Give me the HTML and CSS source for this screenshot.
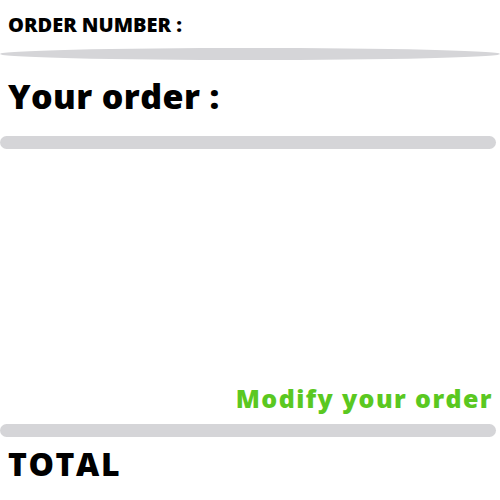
FILE: index.html
```html
<!DOCTYPE html>
<html>
<head>
<meta charset="utf-8">
<link rel="stylesheet" href="styles.css">
</head>
<body>
<div class="page">
  <div class="order-number">ORDER NUMBER :</div>
  <div class="lens"></div>
  <h1 class="title">Your order :</h1>
  <div class="bar"></div>
  <div class="items"></div>
  <div class="modify">Modify your order</div>
  <div class="bar"></div>
  <div class="total">TOTAL</div>
</div>
</body>
</html>
```
FILE: styles.css
```css
html, body {
  margin: 0;
  padding: 0;
  background: #ffffff;
}
.page {
  width: 500px;
  display: flex;
  flex-direction: column;
  font-family: "Open Sans", "DejaVu Sans", sans-serif;
  font-weight: 800;
  color: #000;
}
.order-number {
  font-size: 20px;
  line-height: 24px;
  padding: 13px 0 0 8px;
  height: 24px;
}
.lens {
  margin-top: 11px;
  width: 500px;
  height: 12px;
  border-radius: 50%;
  background: #d5d5d8;
}
.title {
  margin: 0;
  font-size: 34px;
  letter-spacing: 0.4px;
  line-height: 40px;
  padding: 16px 0 0 8px;
  height: 40px;
  font-weight: 800;
}
.bar {
  width: 496px;
  height: 13px;
  border-radius: 7px;
  background: #d5d5d8;
}
.title + .bar {
  margin-top: 20px;
}
.items {
  height: 233px;
}
.modify {
  align-self: flex-end;
  padding-right: 7px;
  font-size: 25px;
  letter-spacing: 1.4px;
  line-height: 32px;
  height: 32px;
  color: #5ac821;
}
.modify + .bar {
  margin-top: 10px;
}
.total {
  font-size: 32px;
  letter-spacing: 1.6px;
  line-height: 40px;
  padding: 7px 0 0 8px;
}
```
